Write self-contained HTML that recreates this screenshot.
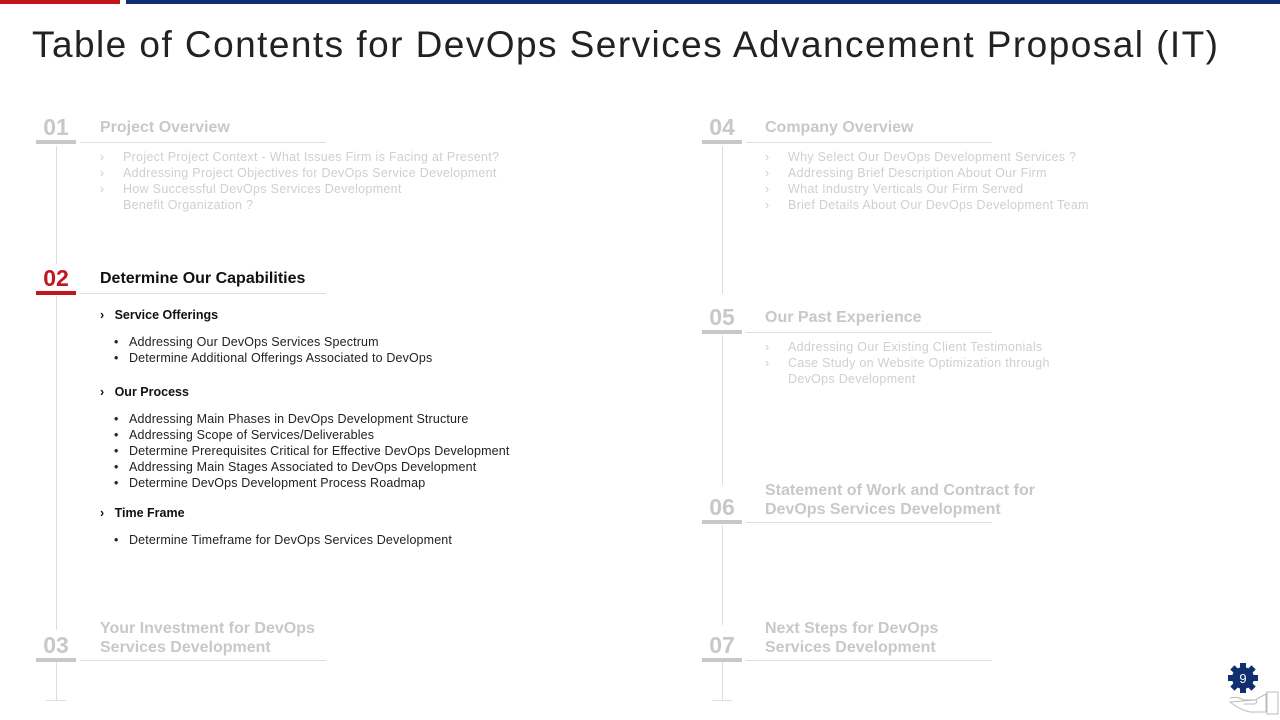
<!DOCTYPE html><html><head><style>
body{margin:0;width:1280px;height:720px;background:#fff;position:relative;overflow:hidden;font-family:"Liberation Sans",sans-serif}
.a{position:absolute}
.num{position:absolute;font-size:23px;font-weight:bold;width:40px;text-align:center;color:#c8c8c8}
.ul{position:absolute;height:4px;width:40px;background:#c8c8c8}
.hl{position:absolute;height:1px;width:246px;background:#ddd}
.vl{position:absolute;width:1px;background:#ddd}
.t{position:absolute;font-size:16px;font-weight:bold;color:#c8c8c8;line-height:19px}
.b{position:absolute;font-size:12.5px;color:#cfcfcf;line-height:16px;letter-spacing:0.3px}
.b div{position:relative;padding-left:23px}
.b div span{position:absolute;left:0}
.d{position:absolute;font-size:12.5px;color:#222;line-height:16px;letter-spacing:0.15px}
.d div{position:relative;padding-left:15px}
.d div:before{content:"•";position:absolute;left:0}
.s{position:absolute;font-size:12.5px;font-weight:bold;color:#111}
</style></head><body>
<div class="a" style="left:0;top:0;width:120px;height:4px;background:#c3161c"></div>
<div class="a" style="left:126px;top:0;width:1154px;height:4px;background:#0f2f6e"></div>
<div class="a" style="left:32px;top:24px;font-size:37px;color:#222;letter-spacing:1.45px">Table of Contents for DevOps Services Advancement Proposal (IT)</div>

<div class="vl" style="left:56px;top:146px;height:118px"></div>
<div class="vl" style="left:56px;top:296px;height:334px"></div>
<div class="vl" style="left:56px;top:662px;height:38px"></div>
<div class="a" style="left:46px;top:700px;width:20px;height:1px;background:#ddd"></div>
<div class="vl" style="left:722px;top:146px;height:148px"></div>
<div class="vl" style="left:722px;top:335px;height:150px"></div>
<div class="vl" style="left:722px;top:525px;height:100px"></div>
<div class="vl" style="left:722px;top:662px;height:38px"></div>
<div class="a" style="left:712px;top:700px;width:20px;height:1px;background:#ddd"></div>

<div class="num" style="left:36px;top:114px">01</div><div class="ul" style="left:36px;top:140px"></div><div class="hl" style="left:80px;top:142px"></div>
<div class="t" style="left:100px;top:118px">Project Overview</div>
<div class="b" style="left:100px;top:149px"><div><span>›</span>Project Project Context - What Issues Firm is Facing at Present?</div><div><span>›</span>Addressing Project Objectives for DevOps Service Development</div><div><span>›</span>How Successful DevOps  Services Development</div><div>Benefit Organization  ?</div></div>

<div class="num" style="left:36px;top:265px;color:#c3161c">02</div><div class="ul" style="left:36px;top:291px;background:#c3161c"></div><div class="hl" style="left:80px;top:293px"></div>
<div class="t" style="left:100px;top:269px;color:#111">Determine Our Capabilities</div>
<div class="s" style="left:100px;top:308px">›&nbsp;&nbsp;&nbsp;Service Offerings</div>
<div class="d" style="left:114px;top:334px"><div>Addressing Our DevOps Services Spectrum</div><div>Determine Additional Offerings Associated to DevOps</div></div>
<div class="s" style="left:100px;top:385px">›&nbsp;&nbsp;&nbsp;Our Process</div>
<div class="d" style="left:114px;top:411px"><div>Addressing Main Phases in DevOps Development  Structure</div><div>Addressing Scope of Services/Deliverables</div><div>Determine Prerequisites Critical for Effective DevOps  Development</div><div>Addressing Main Stages Associated to DevOps  Development</div><div>Determine DevOps  Development  Process Roadmap</div></div>
<div class="s" style="left:100px;top:506px">›&nbsp;&nbsp;&nbsp;Time Frame</div>
<div class="d" style="left:114px;top:532px"><div>Determine Timeframe for DevOps  Services Development</div></div>

<div class="num" style="left:36px;top:632px">03</div><div class="ul" style="left:36px;top:658px"></div><div class="hl" style="left:80px;top:660px"></div>
<div class="t" style="left:100px;top:619px">Your Investment for DevOps<br>Services Development</div>

<div class="num" style="left:702px;top:114px">04</div><div class="ul" style="left:702px;top:140px"></div><div class="hl" style="left:746px;top:142px"></div>
<div class="t" style="left:765px;top:118px">Company Overview</div>
<div class="b" style="left:765px;top:149px"><div><span>›</span>Why Select Our DevOps Development  Services ?</div><div><span>›</span>Addressing Brief Description About Our Firm</div><div><span>›</span>What Industry Verticals Our Firm Served</div><div><span>›</span>Brief Details About Our DevOps  Development  Team</div></div>

<div class="num" style="left:702px;top:304px">05</div><div class="ul" style="left:702px;top:330px"></div><div class="hl" style="left:746px;top:332px"></div>
<div class="t" style="left:765px;top:308px">Our Past Experience</div>
<div class="b" style="left:765px;top:339px"><div><span>›</span>Addressing Our Existing Client Testimonials</div><div><span>›</span>Case Study on Website Optimization through</div><div>DevOps Development</div></div>

<div class="num" style="left:702px;top:494px">06</div><div class="ul" style="left:702px;top:520px"></div><div class="hl" style="left:746px;top:522px"></div>
<div class="t" style="left:765px;top:481px">Statement of Work and Contract for<br>DevOps Services Development</div>

<div class="num" style="left:702px;top:632px">07</div><div class="ul" style="left:702px;top:658px"></div><div class="hl" style="left:746px;top:660px"></div>
<div class="t" style="left:765px;top:619px">Next Steps for DevOps<br>Services Development</div>

<svg class="a" style="left:1222px;top:660px" width="58" height="56" viewBox="0 0 58 56">
<g fill="#0f2f6e" transform="translate(21,18)">
<circle r="11"/>
<g><rect x="-3" y="-15" width="6" height="30"/><rect x="-3" y="-15" width="6" height="30" transform="rotate(45)"/><rect x="-3" y="-15" width="6" height="30" transform="rotate(90)"/><rect x="-3" y="-15" width="6" height="30" transform="rotate(135)"/></g>
</g>
<text x="21" y="23" fill="#fff" font-size="13" text-anchor="middle" font-family="Liberation Sans">9</text>
<path d="M8 38 Q14 36 22 40 L34 40 Q36 42 33 44 L22 44 M33 40 L44 34 L44 52 L28 52 Q18 50 8 42 Z" fill="none" stroke="#bbb" stroke-width="1"/>
<rect x="45" y="32" width="11" height="22" fill="none" stroke="#bbb"/>
</svg>
</body></html>
